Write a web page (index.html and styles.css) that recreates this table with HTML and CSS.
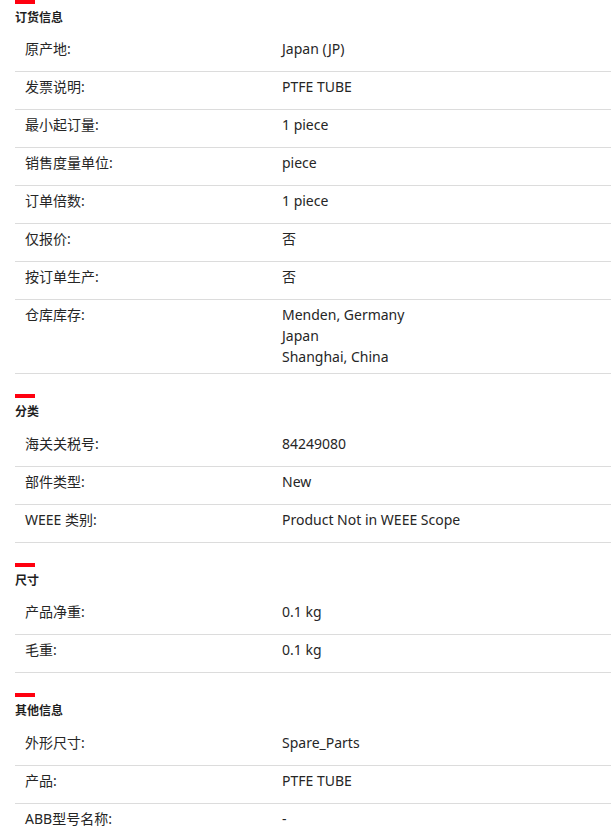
FILE: index.html
```html
<!DOCTYPE html>
<html lang="zh-CN">
<head>
<meta charset="utf-8">
<title>订货信息</title>
<link rel="stylesheet" href="styles.css">
</head>
<body>
<div class="page">
  <section class="group">
    <div class="bar"></div>
    <h3 class="title">订货信息</h3>
    <div class="rows">
      <div class="row"><div class="label">原产地:</div><div class="value"><div>Japan (JP)</div></div></div>
      <div class="row"><div class="label">发票说明:</div><div class="value"><div>PTFE TUBE</div></div></div>
      <div class="row"><div class="label">最小起订量:</div><div class="value"><div>1 piece</div></div></div>
      <div class="row"><div class="label">销售度量单位:</div><div class="value"><div>piece</div></div></div>
      <div class="row"><div class="label">订单倍数:</div><div class="value"><div>1 piece</div></div></div>
      <div class="row"><div class="label">仅报价:</div><div class="value"><div>否</div></div></div>
      <div class="row"><div class="label">按订单生产:</div><div class="value"><div>否</div></div></div>
      <div class="row"><div class="label">仓库库存:</div><div class="value"><div>Menden, Germany</div><div>Japan</div><div>Shanghai, China</div></div></div>
    </div>
  </section>
  <section class="group">
    <div class="bar"></div>
    <h3 class="title">分类</h3>
    <div class="rows">
      <div class="row"><div class="label">海关关税号:</div><div class="value"><div>84249080</div></div></div>
      <div class="row"><div class="label">部件类型:</div><div class="value"><div>New</div></div></div>
      <div class="row"><div class="label">WEEE 类别:</div><div class="value"><div>Product Not in WEEE Scope</div></div></div>
    </div>
  </section>
  <section class="group">
    <div class="bar"></div>
    <h3 class="title">尺寸</h3>
    <div class="rows">
      <div class="row"><div class="label">产品净重:</div><div class="value"><div>0.1 kg</div></div></div>
      <div class="row"><div class="label">毛重:</div><div class="value"><div>0.1 kg</div></div></div>
    </div>
  </section>
  <section class="group">
    <div class="bar"></div>
    <h3 class="title">其他信息</h3>
    <div class="rows">
      <div class="row"><div class="label">外形尺寸:</div><div class="value"><div>Spare_Parts</div></div></div>
      <div class="row"><div class="label">产品:</div><div class="value"><div>PTFE TUBE</div></div></div>
      <div class="row"><div class="label">ABB型号名称:</div><div class="value"><div>-</div></div></div>
    </div>
  </section>
</div>
</body>
</html>
```

FILE: styles.css
```css
html, body {
  margin: 0;
  padding: 0;
  background: #ffffff;
}
body {
  font-family: "Noto Sans", "Noto Sans CJK SC", sans-serif;
  font-size: 14px;
  color: #1f1f1f;
  overflow: hidden;
}
.page {
  padding-left: 15px;
  margin-top: -0.5px;
}
.group {
  margin-bottom: 20px;
}
.bar {
  width: 20px;
  height: 4px;
  background: #ff000f;
}
.title {
  margin: 0;
  padding-top: 4px;
  font-family: "Noto Sans CJK SC", sans-serif;
  font-size: 12px;
  line-height: 18px;
  font-weight: 700;
  height: 18px;
  margin-bottom: 8.5px;
  color: #1f1f1f;
}
.row {
  display: grid;
  grid-template-columns: 267px 1fr;
  padding: 4px 0 6px;
  border-bottom: 1px solid #dcdcdc;
}
.label {
  padding-left: 10px;
  line-height: 21px;
  color: #262626;
}
.value {
  min-height: 27px;
  line-height: 21px;
  color: #262626;
}
```
